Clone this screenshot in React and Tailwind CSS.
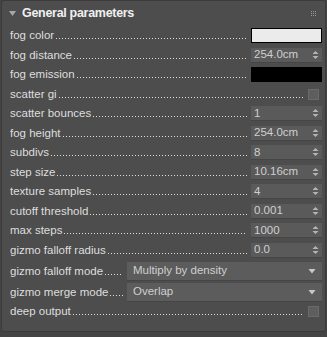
import React from "react";

// small up/down arrows for the spinner fields
const SpinArrows = () => (
  <svg width="7" height="10" viewBox="0 0 7 10" className="shrink-0">
    <path d="M3.5 1 L6.5 4 L0.5 4 Z" fill="#b4b4b4" />
    <path d="M3.5 9 L6.5 6 L0.5 6 Z" fill="#b4b4b4" />
  </svg>
);

const DropArrow = () => (
  <svg width="8" height="6" viewBox="0 0 8 6" className="shrink-0">
    <path d="M0.5 1 L7.5 1 L4 5.5 Z" fill="#c8c8c8" />
  </svg>
);

// label followed by a dotted leader up to the control
const Label = ({ text }) => (
  <div className="flex-1 min-w-0 flex items-center whitespace-nowrap text-[#dedede]">
    <span>{text}</span>
    <div className="flex-1 ml-[2px] mt-[6px] h-[1px] bg-[linear-gradient(90deg,#e0e0e0_1px,transparent_1px)] bg-[length:3px_1px] bg-repeat-x" />
  </div>
);

const Spinner = ({ value }) => (
  <div className="ml-[4px] w-[71px] h-[15px] shrink-0 flex items-center justify-between bg-[#5a5a5a] border-b border-[#454545] pl-[3px] pr-[3px] text-[#cfcfcf]">
    <span className="leading-none">{value}</span>
    <SpinArrows />
  </div>
);

const Color = ({ color }) => (
  <div
    className="ml-[4px] w-[71px] h-[15px] shrink-0 border border-black"
    style={{ background: color }}
  />
);

const Check = () => (
  <div className="ml-[5px] mr-[3px] w-[11px] h-[11px] shrink-0 bg-[#5e5e5e] border border-[#6a6a6a]" />
);

const Row = ({ label, children }) => (
  <div className="h-[19.5px] flex items-center pl-[8px] pr-[3px]">
    <Label text={label} />
    {children}
  </div>
);

const Drop = ({ label, value }) => (
  <div className="h-[19px] flex items-center pl-[8px] pr-[3px]">
    <Label text={label} />
    <div className="ml-[4px] w-[195px] h-[19px] shrink-0 flex items-center justify-between bg-[#5c5c5c] border-b border-[#454545] pl-[6px] pr-[6px] text-[#cfcfcf]">
      <span>{value}</span>
      <DropArrow />
    </div>
  </div>
);

const App = () => {
  return (
    <div
      className="w-[327px] h-[337px] bg-[#444444] pl-[1px] text-[11.5px] overflow-hidden"
      style={{ fontFamily: '"Liberation Sans", Arial, sans-serif' }}
    >
      <div className="w-[325px] h-[332px] bg-[#4d4d4d] border border-[#3b3b3b] rounded-[3px]">
        {/* header */}
        <div className="h-[24px] flex items-center pl-[7px] pr-[9px]">
          <svg width="7" height="5" viewBox="0 0 7 5">
            <path d="M0 0 L7 0 L3.5 5 Z" fill="#a8a8a8" />
          </svg>
          <span className="ml-[6px] text-[12.5px] font-bold tracking-[-0.3px] text-[#f0f0f0] flex-1">
            General parameters
          </span>
          <div className="grid grid-cols-3 gap-[1px]">
            {Array.from({ length: 9 }).map((_, i) => (
              <div key={i} className="w-[1px] h-[1px] bg-[#9a9a9a]" />
            ))}
          </div>
        </div>

        <div className="pt-[1px]">
          <Row label="fog color">
            <Color color="#ebebeb" />
          </Row>
          <Row label="fog distance">
            <Spinner value="254.0cm" />
          </Row>
          <Row label="fog emission">
            <Color color="#000000" />
          </Row>
          <Row label="scatter gi">
            <Check />
          </Row>
          <Row label="scatter bounces">
            <Spinner value="1" />
          </Row>
          <Row label="fog height">
            <Spinner value="254.0cm" />
          </Row>
          <Row label="subdivs">
            <Spinner value="8" />
          </Row>
          <Row label="step size">
            <Spinner value="10.16cm" />
          </Row>
          <Row label="texture samples">
            <Spinner value="4" />
          </Row>
          <Row label="cutoff threshold">
            <Spinner value="0.001" />
          </Row>
          <Row label="max steps">
            <Spinner value="1000" />
          </Row>
          <Row label="gizmo falloff radius">
            <Spinner value="0.0" />
          </Row>
          <div className="h-[2px]" />
          <Drop label="gizmo falloff mode" value="Multiply by density" />
          <div className="h-[2px]" />
          <Drop label="gizmo merge mode" value="Overlap" />
          <Row label="deep output">
            <Check />
          </Row>
        </div>
      </div>
    </div>
  );
};

export default App;
